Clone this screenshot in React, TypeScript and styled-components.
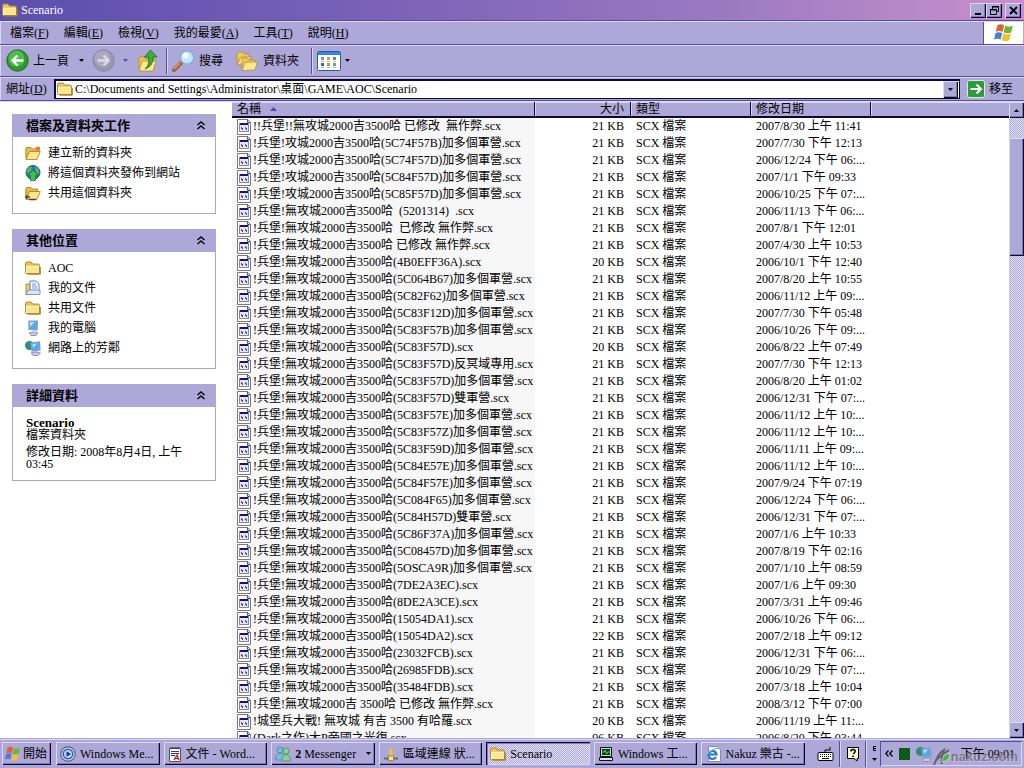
import React from "react";
import styled, { createGlobalStyle, css } from "styled-components";

const face = "#aea8d9";
const light = "#dcd8f4";
const dark = "#564c9c";
const ink = "#0c0830";

const GlobalStyle = createGlobalStyle`
  * { box-sizing: border-box; }
  body {
    margin: 0;
    font-family: "Liberation Serif", "Noto Sans CJK TC", serif;
    font-size: 12px;
    line-height: 16px;
    color: #000;
    background: #fff;
  }
  button, input { font: inherit; color: inherit; margin: 0; padding: 0; border: 0; background: none; }
  svg { display: block; flex: none; }
`;

const raised = css`
  background: ${face};
  box-shadow: inset 1px 1px ${light}, inset -1px -1px ${ink}, inset -2px -2px #8078b8;
`;

const dither = css`
  background: repeating-conic-gradient(#aea8d9 0 25%, #e4e1f7 0 50%) 0 0 / 2px 2px;
`;

const Window = styled.div`
  height: 100vh;
  display: flex;
  flex-direction: column;
  overflow: hidden;
  background: ${face};
`;

const TitleBar = styled.header`
  flex: none;
  height: 20px;
  display: flex;
  align-items: center;
  gap: 3px;
  padding: 0 3px 0 2px;
  color: #fff;
  background: linear-gradient(90deg, #5a4fad 0%, #6a57b3 18%, #7d63b8 40%, #9a79c1 70%, #b989c9 90%, #c98ecb 100%);
`;

const Title = styled.h1`
  flex: 1;
  margin: 0;
  font-size: 12px;
  font-weight: normal;
  line-height: 16px;
`;

const CaptionButtons = styled.div`
  display: flex;
  & > :last-child { margin-left: 3px; }
`;

const CaptionButton = styled.button`
  ${raised}
  width: 16px;
  height: 15px;
  display: grid;
  place-items: center;
`;

const Bar = styled.div<{ $height: number }>`
  flex: none;
  height: ${(p) => p.$height}px;
  display: flex;
  align-items: center;
  border-top: 1px solid ${dark};
  box-shadow: inset 1px 1px ${light};
`;

const MenuItem = styled.button`
  height: 20px;
  padding: 0 8px 0 7px;
`;

const Menus = styled.nav`
  flex: 1;
  display: flex;
  padding-left: 3px;
`;

const LogoBox = styled.div`
  align-self: stretch;
  width: 40px;
  margin: 1px 1px 0 0;
  display: grid;
  place-items: center;
  background: #fff;
  border-left: 1px solid ${dark};
`;

const ToolButton = styled.button<{ $pad?: number }>`
  display: flex;
  align-items: center;
  gap: 4px;
  height: 26px;
  padding: 0 ${(p) => p.$pad ?? 6}px;
`;

const Divider = styled.span`
  width: 2px;
  height: 26px;
  margin: 0 2px;
  border-left: 1px solid ${dark};
  border-right: 1px solid ${light};
`;

const AddressLabel = styled.label`
  width: 54px;
  padding-left: 6px;
  white-space: nowrap;
`;

const AddressBox = styled.div`
  flex: 1;
  height: 20px;
  display: flex;
  align-items: center;
  gap: 2px;
  padding: 0 1px 0 1px;
  background: #fff;
  border: 1px solid ${ink};
  border-width: 2px 1px 1px 2px;
`;

const AddressInput = styled.input`
  flex: 1;
  min-width: 0;
  height: 16px;
  outline: 0;
`;

const DropButton = styled.button`
  ${raised}
  width: 15px;
  height: 17px;
  display: grid;
  place-items: center;
`;

const GoButton = styled.button`
  display: flex;
  align-items: center;
  gap: 4px;
  padding: 0 11px 0 7px;
`;

const Main = styled.main`
  flex: 1;
  min-height: 0;
  display: flex;
  border-top: 1px solid ${dark};
  background: #fff;
  box-shadow: inset 0 1px ${light};
  padding-top: 1px;
`;

const Sidebar = styled.aside`
  flex: none;
  width: 232px;
  padding: 12px 16px 0 12px;
  display: flex;
  flex-direction: column;
  gap: 15px;
`;

const Panel = styled.section`
  border: 1px solid #aaa6c8;
  border-top: 0;
`;

const PanelHead = styled.button`
  width: calc(100% + 2px);
  margin: 0 -1px;
  height: 23px;
  padding: 0 11px 0 14px;
  display: flex;
  align-items: center;
  justify-content: space-between;
  background: ${face};
  font-size: 13px;
  font-weight: bold;
`;

const LinkList = styled.ul`
  list-style: none;
  margin: 0;
  padding: 6px 12px 10px;
`;

const TaskLink = styled.a`
  height: 20px;
  display: flex;
  align-items: center;
  gap: 7px;
  color: inherit;
  text-decoration: none;
`;

const Details = styled.div`
  padding: 10px 24px 10px 13px;
  line-height: 12px;
`;

const DetailLine = styled.p<{ $gap?: boolean }>`
  margin: ${(p) => (p.$gap ? 5 : 0)}px 0 0;
`;

const DetailName = styled.strong`
  display: block;
  font-size: 13px;
`;

const ListPane = styled.div`
  flex: 1;
  min-width: 0;
  overflow: hidden;
`;

const FileTable = styled.table`
  width: 100%;
  table-layout: fixed;
  border-collapse: separate;
  border-spacing: 0;
`;

const Head = styled.th<{ $right?: boolean }>`
  height: 16px;
  padding: 0 6px 0 5px;
  text-align: ${(p) => (p.$right ? "right" : "left")};
  font-weight: normal;
  line-height: 14px;
  background: ${face};
  border-bottom: 2px solid ${ink};
  box-shadow: inset 0 1px ${light};
  & + & { box-shadow: inset 1px 1px ${light}; }
  &:not(:last-child) { border-right: 1px solid ${ink}; }
`;

const SortButton = styled.button`
  display: inline-flex;
  align-items: center;
  gap: 9px;
  height: 14px;
`;

const Cell = styled.td<{ $right?: boolean; $sorted?: boolean }>`
  height: 17px;
  padding: 0 0 0 5px;
  padding-right: ${(p) => (p.$right ? 7 : 0)}px;
  text-align: ${(p) => (p.$right ? "right" : "left")};
  background: ${(p) => (p.$sorted ? "#f7f7f7" : "#fff")};
  line-height: 17px;
  white-space: pre;
  overflow: hidden;
`;

const FileName = styled.div`
  display: flex;
  align-items: center;
  gap: 2px;
  height: 17px;
`;

const ScrollBar = styled.div`
  ${dither}
  flex: none;
  width: 15px;
  display: flex;
  flex-direction: column;
`;

const ScrollButton = styled.button`
  ${raised}
  flex: none;
  height: 16px;
  display: grid;
  place-items: center;
`;

const Space = styled.div<{ $grow: number }>`
  flex: ${(p) => p.$grow} 1 0;
`;

const Thumb = styled.div`
  ${raised}
  flex: 118 1 0;
`;

const TaskBar = styled.footer`
  flex: none;
  height: 30px;
  display: flex;
  align-items: center;
  padding: 0 2px;
  border-top: 1px solid ${face};
  box-shadow: inset 0 1px ${light};
`;

const Tasks = styled.div`
  flex: 1;
  min-width: 0;
  display: flex;
  gap: 4px;
  margin: 0 12px 0 5px;
`;

const StartButton = styled.button`
  ${raised}
  width: 49px;
  height: 23px;
  display: flex;
  align-items: center;
  gap: 1px;
  padding-left: 2px;
`;

const TaskButton = styled.button<{ $active?: boolean }>`
  ${raised}
  flex: 1 1 0;
  min-width: 0;
  height: 23px;
  display: flex;
  align-items: center;
  gap: 4px;
  padding: 0 4px;
  white-space: nowrap;
  ${(p) => p.$active && css`
    ${dither}
    box-shadow: inset 1px 1px ${ink}, inset 2px 2px #8078b8, inset -1px -1px ${light};
  `}
`;

const TaskText = styled.span`
  flex: 1;
  overflow: hidden;
  text-align: left;
`;

const LangTools = styled.div`
  display: flex;
  align-items: center;
  gap: 3px;
`;

const Tray = styled.div`
  position: relative;
  width: 142px;
  height: 25px;
  margin-left: 3px;
  padding: 0 7px 0 5px;
  display: flex;
  align-items: center;
  gap: 6px;
  box-shadow: inset 1px 1px ${dark}, inset -1px -1px ${light};
`;

const Clock = styled.time`
  margin-left: auto;
`;

const Watermark = styled.div`
  position: absolute;
  right: 4px;
  bottom: 0;
  display: flex;
  align-items: center;
  font: bold 13px/16px "Liberation Sans", sans-serif;
  color: #6f6b78cc;
  text-shadow: 1px 1px #d8d4ea88;
`;

const Folder = ({ size = 16 }: { size?: number }) => (
  <svg width={size} height={size} viewBox="0 0 16 16" aria-hidden="true">
    <path d="M.5 4Q.5 2 2 2H6L7.500 4H13Q14.500 4 14.500 5.500V13.500H2Q.5 13.500 .5 12.500Z" fill="#e9c656" stroke="#a5852c" strokeWidth=".9" />
    <path d="M1.300 6.400H14V13H1.300Z" fill="#fbe68e" />
    <path d="M1.500 6.300H14M1.500 6.300V13" stroke="#fff8cf" />
    <path d="M2.500 14.200H15.300V7" fill="none" stroke="#9b7b2b" />
  </svg>
);

const OpenFolder = ({ size = 16, children }: { size?: number; children?: React.ReactNode }) => (
  <svg width={size} height={size} viewBox="0 0 16 16" aria-hidden="true">
    <path d="M.8 13.500V4Q.8 2.500 2 2.500H6L7.300 4H12.500V7" fill="#e7bc4a" stroke="#a47a1e" strokeWidth=".8" />
    <path d="M1 14.500 4.500 6.500H15.300L12 14.500Z" fill="#fde78c" stroke="#a47a1e" strokeWidth=".8" />
    {children}
  </svg>
);

const FoldersIcon = () => (
  <svg width="24" height="24" viewBox="0 0 24 24" aria-hidden="true">
    <path d="M2 15V4Q2 3 3 3H7L9 5H14V9L5 10Z" fill="#f0c860" stroke="#b98a2c" strokeWidth=".8" />
    <path d="M2 16 6 8H16L13 13Z" fill="#fde793" stroke="#b98a2c" strokeWidth=".8" />
    <path d="M7 20V10Q7 9 8 9H12L14 11H20V15" fill="#f0c860" stroke="#b98a2c" strokeWidth=".8" />
    <path d="M7 21.500 10 13H22.500L20 21Z" fill="#fde78c" stroke="#b98a2c" strokeWidth=".8" />
  </svg>
);

const ArrowDisc = ({ forward }: { forward?: boolean }) => (
  <svg width="23" height="23" viewBox="0 0 23 23" aria-hidden="true">
    <circle cx="11.500" cy="11.500" r="10.700" fill={forward ? "#9a96ab" : "#2c9a2c"} stroke={forward ? "#8a86a0" : "#1e6f22"} />
    <circle cx="10.500" cy="9.500" r="8" fill={forward ? "#b3afc2" : "#5dc552"} opacity=".75" />
    <path
      d={forward ? "M5.500 11.500H16.500M11.500 6.500 16.500 11.500 11.500 16.500" : "M17.500 11.500H6.500M11.500 6.500 6.500 11.500 11.500 16.500"}
      fill="none" stroke={forward ? "#dedbea" : "#fff"} strokeWidth="2.400"
    />
  </svg>
);

const UpFolder = () => (
  <svg width="20" height="24" viewBox="1 0 20 24" aria-hidden="true">
    <path d="M2 21V9Q2 8 3 8H7L9 10H17V21Z" fill="#eec653" stroke="#b98a2c" strokeWidth=".8" />
    <path d="M2 22 5 12H19L16 22Z" fill="#fde78c" stroke="#b98a2c" strokeWidth=".8" />
    <path d="M8 20Q13 16 11.500 8H7.500L13.500 1 20 8H16Q16.500 17 8 20Z" fill="#3dae37" stroke="#1f7420" strokeWidth=".9" />
  </svg>
);

const SearchIcon = () => (
  <svg width="23" height="24" viewBox="0 0 23 24" aria-hidden="true">
    <path d="M2 21 9 14" stroke="#a0623a" strokeWidth="4" strokeLinecap="round" />
    <path d="M2 20 8 14" stroke="#dda070" strokeWidth="1.500" />
    <circle cx="15" cy="8.500" r="6.800" fill="#bfe4fb" stroke="#8fa9d6" strokeWidth="1.600" />
    <circle cx="13.500" cy="6.500" r="3" fill="#f3fbff" />
  </svg>
);

const ViewsIcon = () => (
  <svg width="24" height="20" viewBox="0 0 24 20" aria-hidden="true">
    <rect x=".5" y=".5" width="23" height="19" rx="1" fill="#fff" stroke="#1f5fae" />
    <path d="M1 1H23V4H1Z" fill="#3a86dd" />
    <path d="M4 6H7V9H4ZM16 12H19V15H16Z" fill="#8e8e9c" />
    <path d="M10 6H13V9H10Z" fill="#d59472" />
    <path d="M16 6H19V9H16Z" fill="#4aa24a" />
    <path d="M4 12H7V15H4Z" fill="#2f62b8" />
    <path d="M10 12H13V15H10Z" fill="#c79c20" />
    <path d="M4 10.500H7M10 10.500H13M16 10.500H19M4 16.500H7M10 16.500H13M16 16.500H19" stroke="#b4b4c0" />
  </svg>
);

const Flag = ({ size }: { size: number }) => (
  <svg width={size} height={size} viewBox="0 0 20 20" aria-hidden="true">
    <path d="M4 3Q7 1 10 3L8.600 9Q5.500 7.500 2.500 9Z" fill="#e5602f" />
    <path d="M11 3.500Q14 5 18 3.500L16.500 9.500Q13 11 9.700 9.500Z" fill="#6fb53c" />
    <path d="M2.300 10Q5.500 8.500 8.400 10L7 16Q4 14.500 1 16Z" fill="#4480d8" />
    <path d="M9.400 10.500Q13 12 16.200 10.500L14.800 16.500Q11.500 18.500 8 16.500Z" fill="#f0c02d" />
  </svg>
);

const Caret = ({ color = "#000", up, w = 5 }: { color?: string; up?: boolean; w?: number }) => (
  <svg width={w} height={w > 5 ? 4 : 3} viewBox="0 0 5 3" preserveAspectRatio="none" aria-hidden="true">
    <path d={up ? "M0 3H5L2.500 0Z" : "M0 0H5L2.500 3Z"} fill={color} />
  </svg>
);

const Chevrons = () => (
  <svg width="8" height="9" viewBox="0 0 8 9" aria-hidden="true">
    <path d="M.5 4 4 1 7.500 4M.5 8 4 5 7.500 8" fill="none" stroke="#000" strokeWidth="1.400" />
  </svg>
);

const FileIcon = () => (
  <svg width="14" height="16" viewBox="0 0 14 16" aria-hidden="true">
    <path d="M.5.5H10.500L13.500 3.500V15.500H.5Z" fill="#fff" stroke="#7a7a7a" />
    <path d="M10.500.5V3.500H13.500" fill="none" stroke="#555" />
    <rect x="2.500" y="4.500" width="9" height="8" fill="#e6e6ee" stroke="#8488a8" />
    <path d="M3 4H11V6H3Z" fill="#10108c" />
    <path d="M4 8H5V10H4Z" fill="#c83030" />
    <path d="M5 9H6V11H5Z" fill="#444" />
    <path d="M8 8H9V10H8Z" fill="#1c8a90" />
    <path d="M9 9H10V11H9Z" fill="#2846c0" />
  </svg>
);

const Monitor = ({ globe }: { globe?: boolean }) => (
  <svg width="16" height="16" viewBox="0 0 16 16" aria-hidden="true">
    {globe && <circle cx="4.500" cy="5.500" r="4.500" fill="#2f9650" />}
    {globe && <path d="M1 4Q4 2 6 5T3 9" fill="none" stroke="#3b7fd0" strokeWidth="1.500" />}
    <path d={globe ? "M6 3 14.500 2 15 10 7 11Z" : "M4 1 12.500 1 12 10 4 9.500Z"} fill="#4fabee" stroke="#8f9ac0" strokeWidth="1.200" />
    <path d={globe ? "M7.500 4 12 3.500 8 8Z" : "M5 2 9.500 2 5 7Z"} fill="#b8e6ff" />
    <path d={globe ? "M6 13Q11 10.500 15.500 13L13 15.500H8Z" : "M4 13Q8 10.500 13 13L11 15.500H6Z"} fill="#c9cbe2" stroke="#7c80a8" strokeWidth=".8" />
  </svg>
);

const Documents = () => (
  <svg width="16" height="16" viewBox="0 0 16 16" aria-hidden="true">
    <path d="M1 4H5V14.500H1Z" fill="#f2d368" stroke="#99772a" strokeWidth=".8" />
    <path d="M5 1H11L14 4V11H5Z" fill="#f4f9ff" stroke="#5f87bc" />
    <path d="M7 4H11M7 6H12M7 8H12" stroke="#6d9de0" />
    <path d="M1 14.500 3 10H15V14.500Z" fill="#d8e5f6" stroke="#7085a4" strokeWidth=".8" />
  </svg>
);

const GlobeUp = () => (
  <svg width="16" height="16" viewBox="0 0 16 16" aria-hidden="true">
    <circle cx="8" cy="7.500" r="7" fill="#2b72c0" stroke="#2d5c75" />
    <path d="M2 4Q5 1 7 2L6 6 3 8 1 7ZM10 1Q15 3 14 9L11 7Z" fill="#4ebd59" />
    <path d="M8 5 13 10.500H10.500V15.500H5.500V10.500H3Z" fill="#45c04b" stroke="#1d7b29" strokeWidth=".8" />
  </svg>
);

const Player = () => (
  <svg width="16" height="16" viewBox="0 0 16 16" aria-hidden="true">
    <circle cx="8" cy="8" r="7.200" fill="#e8eefb" stroke="#4d5f80" strokeWidth="1.200" />
    <circle cx="8" cy="8" r="4.800" fill="#b9d3f5" stroke="#2e5fb2" strokeWidth="1.600" />
    <path d="M6.500 5.300V10.700L11 8Z" fill="#173c88" />
  </svg>
);

const WordPad = () => (
  <svg width="14" height="16" viewBox="0 0 14 16" aria-hidden="true">
    <path d="M1.500 2.500H12.500V15.500H1.500Z" fill="#fff" stroke="#555" />
    <path d="M3 1V3M5 1V3M7 1V3M9 1V3M11 1V3" stroke="#222" />
    <path d="M3 5.500H11M3 7.500H11M3 9.500H7" stroke="#2b36a8" />
    <path d="M6 14 9 9 11 14M7 12.500H10" fill="none" stroke="#cc1f1f" strokeWidth="1.300" />
  </svg>
);

const People = () => (
  <svg width="16" height="16" viewBox="0 0 16 16" aria-hidden="true">
    <circle cx="5" cy="4" r="3" fill="#79bce0" stroke="#3f7f9f" strokeWidth=".7" />
    <path d="M.5 14Q0 7.500 5 7.500T9 14Z" fill="#79bce0" stroke="#3f7f9f" strokeWidth=".7" />
    <circle cx="11" cy="5" r="3" fill="#8dcf96" stroke="#3f8a61" strokeWidth=".7" />
    <path d="M7 15Q6.500 8.500 11 8.500T15.500 15Z" fill="#8dcf96" stroke="#3f8a61" strokeWidth=".7" />
  </svg>
);

const NetPlug = () => (
  <svg width="16" height="16" viewBox="0 0 16 16" aria-hidden="true">
    <path d="M8 3V11" stroke="#e3c63a" strokeWidth="3" />
    <path d="M1 12.500H15" stroke="#666" strokeWidth="2" />
    <path d="M5.500 10H10.500V14.500H5.500Z" fill="#f7e887" stroke="#a08a2a" />
  </svg>
);

const OldComputer = () => (
  <svg width="16" height="16" viewBox="0 0 16 16" aria-hidden="true">
    <path d="M2.500 1.500H13.500V10.500H2.500Z" fill="#d4d4d4" stroke="#111" />
    <path d="M4 3H12V9H4Z" fill="#073c1c" />
    <path d="M4 6H6L7 4 8.500 8 9.500 6H12" fill="none" stroke="#3be05b" />
    <path d="M1.500 11.500H14.500V14.500H1.500Z" fill="#ddd" stroke="#111" />
  </svg>
);

const Browser = () => (
  <svg width="16" height="16" viewBox="0 0 16 16" aria-hidden="true">
    <path d="M3.500.5H12L15.500 4V15.500H3.500Z" fill="#fff" stroke="#8c8ca0" />
    <path d="M11 11A4 4 0 1 1 11.500 8.500H4" fill="none" stroke="#2378c8" strokeWidth="2.200" />
    <path d="M1 13Q0 9 6 5T13 3" fill="none" stroke="#67b0ea" strokeWidth="1.200" />
  </svg>
);

const Keyboard = () => (
  <svg width="17" height="16" viewBox="0 0 17 16" aria-hidden="true">
    <path d="M8 6V4H13V1" fill="none" stroke="#000" />
    <rect x="1" y="6.500" width="15" height="8" rx="1" fill="#fff" stroke="#000" />
    <path d="M3 8.500H14M3 10.500H14" stroke="#000" strokeDasharray="1 1" />
    <path d="M5 12.500H12" stroke="#000" />
  </svg>
);

const Help = () => (
  <svg width="14" height="16" viewBox="0 0 14 16" aria-hidden="true">
    <path d="M1.500 1.500H12.500V12.500H11V15L8 12.500H1.500Z" fill="#ffffd8" stroke="#000" />
    <path d="M4.800 5.500Q4.800 3.500 7 3.500T9.200 5.500Q9.200 6.500 7 8" fill="none" stroke="#000" strokeWidth="1.500" />
    <path d="M6.200 9.500H7.800V11H6.200Z" />
  </svg>
);

const TrayIcon = styled.span`
  width: 11px;
  height: 12px;
  background: repeating-conic-gradient(#0a4a14 0 25%, #0f6a20 0 50%) 0 0 / 4px 4px;
`;

const menus: [string, string][] = [
  ["檔案", "F"], ["編輯", "E"], ["檢視", "V"], ["我的最愛", "A"], ["工具", "T"], ["說明", "H"],
];

const base = "!兵堡!無攻城2000吉3500哈";
const files: [string, number, string][] = [
  ["!!兵堡!!無攻城2000吉3500哈 已修改  無作弊", 21, "2007/8/30 上午 11:41"],
  ["!兵堡!攻城2000吉3500哈(5C74F57B)加多個軍營", 21, "2007/7/30 下午 12:13"],
  ["!兵堡!攻城2000吉3500哈(5C74F57D)加多個軍營", 21, "2006/12/24 下午 06:..."],
  ["!兵堡!攻城2000吉3500哈(5C84F57D)加多個軍營", 21, "2007/1/1 下午 09:33"],
  ["!兵堡!攻城2000吉3500哈(5C85F57D)加多個軍營", 21, "2006/10/25 下午 07:..."],
  [base + "  (5201314)  ", 21, "2006/11/13 下午 06:..."],
  [base + "  已修改 無作弊", 21, "2007/8/1 下午 12:01"],
  [base + " 已修改 無作弊", 21, "2007/4/30 上午 10:53"],
  [base + "(4B0EFF36A)", 20, "2006/10/1 下午 12:40"],
  [base + "(5C064B67)加多個軍營", 21, "2007/8/20 上午 10:55"],
  [base + "(5C82F62)加多個軍營", 21, "2006/11/12 上午 09:..."],
  [base + "(5C83F12D)加多個軍營", 21, "2007/7/30 下午 05:48"],
  [base + "(5C83F57B)加多個軍營", 21, "2006/10/26 下午 09:..."],
  [base + "(5C83F57D)", 20, "2006/8/22 上午 07:49"],
  [base + "(5C83F57D)反冥域專用", 21, "2007/7/30 下午 12:13"],
  [base + "(5C83F57D)加多個軍營", 21, "2006/8/20 上午 01:02"],
  [base + "(5C83F57D)雙軍營", 21, "2006/12/31 下午 07:..."],
  [base + "(5C83F57E)加多個軍營", 21, "2006/11/12 上午 10:..."],
  [base + "(5C83F57Z)加多個軍營", 21, "2006/11/12 上午 10:..."],
  [base + "(5C83F59D)加多個軍營", 21, "2006/11/11 上午 09:..."],
  [base + "(5C84E57E)加多個軍營", 21, "2006/11/12 上午 10:..."],
  [base + "(5C84F57E)加多個軍營", 21, "2007/9/24 下午 07:19"],
  [base + "(5C084F65)加多個軍營", 21, "2006/12/24 下午 06:..."],
  [base + "(5C84H57D)雙軍營", 21, "2006/12/31 下午 07:..."],
  [base + "(5C86F37A)加多個軍營", 21, "2007/1/6 上午 10:33"],
  [base + "(5C08457D)加多個軍營", 21, "2007/8/19 下午 02:16"],
  [base + "(5OSCA9R)加多個軍營", 21, "2007/1/10 上午 08:59"],
  [base + "(7DE2A3EC)", 21, "2007/1/6 上午 09:30"],
  [base + "(8DE2A3CE)", 21, "2007/3/31 上午 09:46"],
  [base + "(15054DA1)", 21, "2006/10/26 下午 06:..."],
  [base + "(15054DA2)", 22, "2007/2/18 上午 09:12"],
  [base + "(23032FCB)", 21, "2006/12/31 下午 06:..."],
  [base + "(26985FDB)", 21, "2006/10/29 下午 07:..."],
  [base + "(35484FDB)", 21, "2007/3/18 上午 10:04"],
  ["!兵堡!無攻城2000吉 3500哈 已修改 無作弊", 21, "2008/3/12 下午 07:00"],
  ["!城堡兵大戰! 無攻城 有吉 3500 有哈羅", 20, "2006/11/19 上午 11:..."],
  ["(Dark之作)大P帝國之光復", 96, "2006/8/20 下午 03:44"],
];

const folderTasks: [string, React.ReactNode][] = [
  ["建立新的資料夾", <OpenFolder><path d="M10 3 12 1.500 15 2V6L12 5Z" fill="#f17438" /></OpenFolder>],
  ["將這個資料夾發佈到網站", <GlobeUp />],
  ["共用這個資料夾", <OpenFolder><path d="M0 12H5M2 10V14M4 14.500H11" stroke="#5a4420" strokeWidth="1.500" /></OpenFolder>],
];

const places: [string, React.ReactNode][] = [
  ["AOC", <Folder />],
  ["我的文件", <Documents />],
  ["共用文件", <Folder />],
  ["我的電腦", <Monitor />],
  ["網路上的芳鄰", <Monitor globe />],
];

const LinkPanel = ({ title, items }: { title: string; items: [string, React.ReactNode][] }) => (
  <Panel>
    <PanelHead>{title}<Chevrons /></PanelHead>
    <LinkList>
      {items.map(([label, icon]) => (
        <li key={label}><TaskLink href="#">{icon}{label}</TaskLink></li>
      ))}
    </LinkList>
  </Panel>
);

export default function App() {
  return (
    <Window>
      <GlobalStyle />
      <TitleBar>
        <Folder />
        <Title>Scenario</Title>
        <CaptionButtons>
          <CaptionButton aria-label="最小化">
            <svg width="9" height="9" viewBox="0 0 9 9"><path d="M1 8H7" stroke="#000" strokeWidth="2" /></svg>
          </CaptionButton>
          <CaptionButton aria-label="還原">
            <svg width="9" height="9" viewBox="0 0 9 9">
              <path d="M2.500 3V.5H8.500V5.500H7M2 1H9M.5 3.500H6.500V8.500H.5ZM0 4H7" fill="none" stroke="#000" />
            </svg>
          </CaptionButton>
          <CaptionButton aria-label="關閉">
            <svg width="9" height="9" viewBox="0 0 9 9"><path d="M1 1 8 8M8 1 1 8" stroke="#000" strokeWidth="1.800" /></svg>
          </CaptionButton>
        </CaptionButtons>
      </TitleBar>

      <Bar $height={24}>
        <Menus>
          {menus.map(([label, key]) => (
            <MenuItem key={key}>{label}(<u>{key}</u>)</MenuItem>
          ))}
        </Menus>
        <LogoBox><Flag size={22} /></LogoBox>
      </Bar>

      <Bar $height={32}>
        <ToolButton><ArrowDisc />上一頁</ToolButton>
        <ToolButton aria-label="上一頁選項" $pad={4}><Caret /></ToolButton>
        <ToolButton aria-label="下一頁" $pad={4}><ArrowDisc forward /></ToolButton>
        <ToolButton aria-label="下一頁選項" $pad={4}><Caret color={dark} /></ToolButton>
        <ToolButton aria-label="上移"><UpFolder /></ToolButton>
        <Divider />
        <ToolButton $pad={2}><SearchIcon />搜尋</ToolButton>
        <ToolButton $pad={10}><FoldersIcon />資料夾</ToolButton>
        <Divider />
        <ToolButton aria-label="檢視" $pad={2}><ViewsIcon /><Caret /></ToolButton>
      </Bar>

      <Bar $height={24}>
        <AddressLabel htmlFor="address">網址(<u>D</u>)</AddressLabel>
        <AddressBox>
          <Folder />
          <AddressInput id="address" defaultValue="C:\Documents and Settings\Administrator\桌面\GAME\AOC\Scenario" />
          <DropButton aria-label="顯示網址"><Caret /></DropButton>
        </AddressBox>
        <GoButton>
          <svg width="18" height="18" viewBox="0 0 18 18" aria-hidden="true">
            <rect x=".5" y=".5" width="17" height="17" rx="2" fill="#2f9a3b" stroke="#d8f0d8" />
            <path d="M3.500 9H14M9.500 4.500 14 9 9.500 13.500" fill="none" stroke="#fff" strokeWidth="2" />
          </svg>
          移至
        </GoButton>
      </Bar>

      <Main>
        <Sidebar>
          <LinkPanel title="檔案及資料夾工作" items={folderTasks} />
          <LinkPanel title="其他位置" items={places} />
          <Panel>
            <PanelHead>詳細資料<Chevrons /></PanelHead>
            <Details>
              <DetailName>Scenario</DetailName>
              <DetailLine>檔案資料夾</DetailLine>
              <DetailLine $gap>修改日期: 2008年8月4日, 上午 03:45</DetailLine>
            </Details>
          </Panel>
        </Sidebar>
        <ListPane>
          <FileTable>
            <colgroup>
              <col width="303" />
              <col width="96" />
              <col width="120" />
              <col width="120" />
              <col />
            </colgroup>
            <thead>
              <tr>
                <Head><SortButton>名稱<Caret up color={dark} w={7} /></SortButton></Head>
                <Head $right><SortButton>大小</SortButton></Head>
                <Head><SortButton>類型</SortButton></Head>
                <Head><SortButton>修改日期</SortButton></Head>
                <Head />
              </tr>
            </thead>
            <tbody>
              {files.map(([name, size, date]) => (
                <tr key={name}>
                  <Cell $sorted><FileName><FileIcon />{name}.scx</FileName></Cell>
                  <Cell $right>{size} KB</Cell>
                  <Cell>SCX 檔案</Cell>
                  <Cell>{date}</Cell>
                  <Cell />
                </tr>
              ))}
            </tbody>
          </FileTable>
        </ListPane>
        <ScrollBar>
          <ScrollButton aria-label="向上捲動"><Caret up /></ScrollButton>
          <Space $grow={20} />
          <Thumb />
          <Space $grow={466} />
          <ScrollButton aria-label="向下捲動"><Caret /></ScrollButton>
        </ScrollBar>
      </Main>

      <TaskBar>
        <StartButton><Flag size={18} />開始</StartButton>
        <Tasks>
          <TaskButton><Player /><TaskText>Windows Me...</TaskText></TaskButton>
          <TaskButton><WordPad /><TaskText>文件 - Word...</TaskText></TaskButton>
          <TaskButton><People /><TaskText><b>2</b> Messenger</TaskText><Caret /></TaskButton>
          <TaskButton><NetPlug /><TaskText>區域連線 狀...</TaskText></TaskButton>
          <TaskButton $active><Folder /><TaskText>Scenario</TaskText></TaskButton>
          <TaskButton><OldComputer /><TaskText>Windows 工...</TaskText></TaskButton>
          <TaskButton><Browser /><TaskText>Nakuz 樂古 -...</TaskText></TaskButton>
        </Tasks>
        <LangTools>
          <Keyboard />
          <Divider />
          <Help />
          <Divider />
          <svg width="5" height="16" viewBox="0 0 5 16" aria-hidden="true">
            <path d="M4 .5H1.500V4.500H4M1.500 2.500H4" fill="none" stroke="#000" />
            <path d="M0 12H5L2.500 15Z" />
          </svg>
        </LangTools>
        <Tray>
          <svg width="8" height="7" viewBox="0 0 8 7" aria-hidden="true">
            <path d="M3.500.5.8 3.500 3.500 6.500M7.500.5 4.800 3.500 7.500 6.500" fill="none" stroke="#000" strokeWidth="1.300" />
          </svg>
          <TrayIcon />
          <Monitor globe />
          <Clock>下午 09:01</Clock>
          <Watermark>
            <svg width="18" height="18" viewBox="0 0 18 18" aria-hidden="true">
              <path d="M1 17Q6 4 11 2 8 8 9 16M3 12Q9 7 16 2" fill="none" stroke="#66626e" strokeWidth="2" />
              <path d="M9 14Q9 6 17 5 17 13 9 14Z" fill="#4fae45" stroke="#eee" strokeWidth=".6" />
            </svg>
            nakuz.com
          </Watermark>
        </Tray>
      </TaskBar>
    </Window>
  );
}
